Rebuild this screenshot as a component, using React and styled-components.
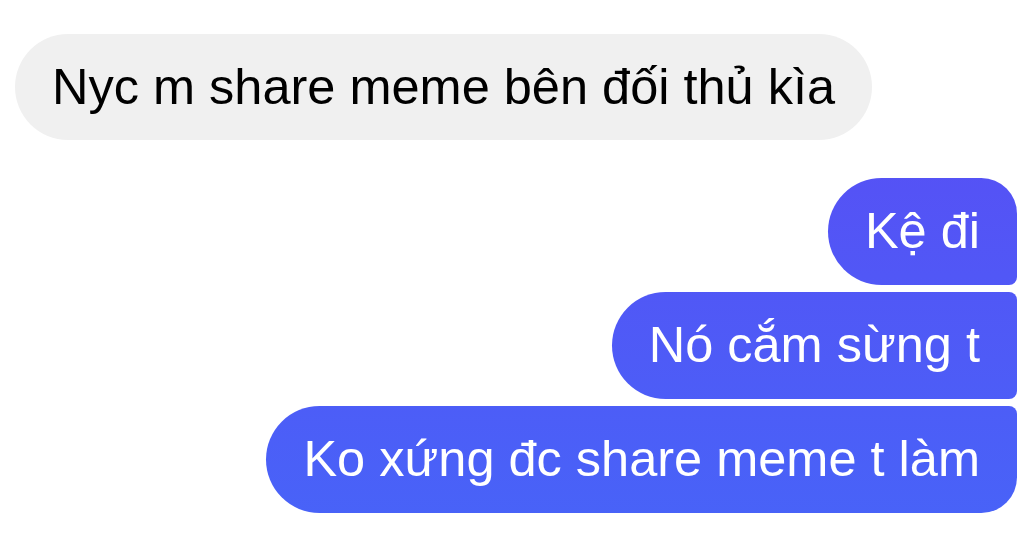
import styled, { createGlobalStyle } from 'styled-components';

const Global = createGlobalStyle`
    body {
        margin: 0;
        background: #ffffff;
        font-family: 'Liberation Sans', Arial, sans-serif;
    }
`

const messages = [
    { text: 'Kệ đi', pos: 'first' },
    { text: 'Nó cắm sừng t', pos: 'middle' },
    { text: 'Ko xứng đc share meme t làm', pos: 'last' },
];

function App() {
    return (
        <Thread>
            <Global />
            <Row>
                <Incoming>Nyc m share meme bên đối thủ kìa</Incoming>
            </Row>
            <Group>
                {messages.map((m) => (
                    <Outgoing key={m.text} $pos={m.pos}>{m.text}</Outgoing>
                ))}
            </Group>
        </Thread>
    );
}

const Thread = styled.div`
    display: flex;
    flex-direction: column;
    gap: 38px;
    padding: 34px 4px 0 15px;
    width: 1021px;
    height: 550px;
    box-sizing: border-box;
    overflow: hidden;
`
const Row = styled.div`
    display: flex;
`
const Bubble = styled.div`
    box-sizing: border-box;
    height: 107px;
    display: flex;
    align-items: center;
    padding: 0 37px 0 37px;
    font-size: 50.5px;
    line-height: 1;
    white-space: nowrap;
`
const Incoming = styled(Bubble)`
    background: #f0f0f0;
    color: #000;
    border-radius: 54px;
    height: 106px;
`
const Group = styled.div`
    display: flex;
    flex-direction: column;
    align-items: flex-end;
    gap: 7px;
`
const Outgoing = styled(Bubble)`
    color: #fff;
    background: linear-gradient(180deg, #5b4af4 0px, #4764f8 550px);
    background-attachment: fixed;
    border-radius: ${({ $pos }) =>
        $pos === 'first' ? '54px 36px 8px 54px' :
        $pos === 'last' ? '54px 8px 36px 54px' :
        '54px 8px 8px 54px'};
`
export default App;
